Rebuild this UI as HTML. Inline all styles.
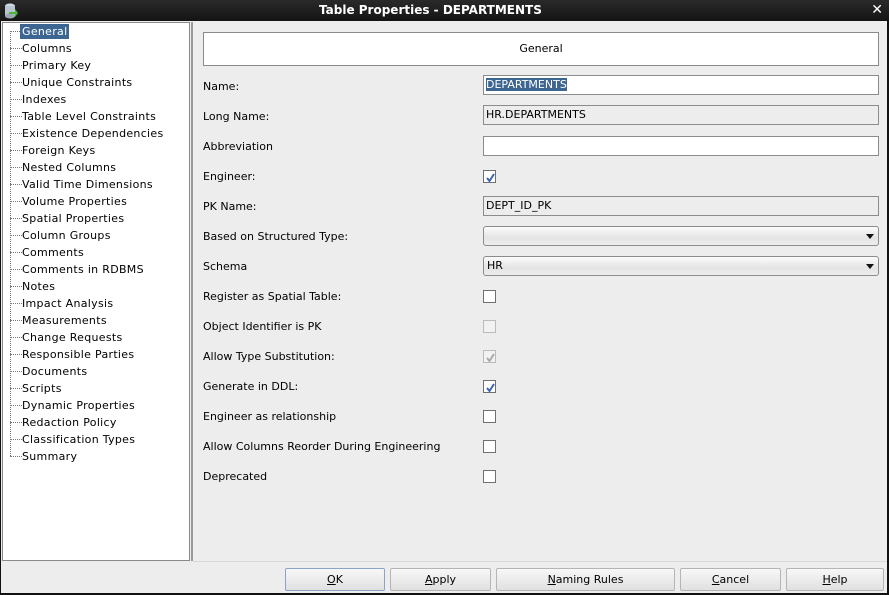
<!DOCTYPE html>
<html><head><style>
*{margin:0;padding:0;box-sizing:border-box}
body{width:889px;height:595px;background:#ededed;font-family:"DejaVu Sans","Liberation Sans",sans-serif;font-size:11px;color:#000;position:relative;overflow:hidden}
.abs{position:absolute}
#title{left:0;top:0;width:889px;height:21px;background:linear-gradient(#2a2a2a,#141414);color:#fff;font-weight:bold;font-size:12px;line-height:21px}
#frameL{left:0;top:21px;width:1px;height:574px;background:#111}
#frameR{left:887px;top:21px;width:2px;height:574px;background:#111}
#frameB{left:0;top:593px;width:889px;height:2px;background:#111}
#tree{left:2px;top:22px;width:188px;height:539px;background:#fff;border:1px solid #8a8a8a}
#split{left:191px;top:22px;width:2px;height:539px;background:#9a9a9a}
.ti{position:absolute;left:17px;height:15px;line-height:15px;padding:0 2px;letter-spacing:0.3px}
.dash{position:absolute;left:7px;width:12px;border-top:1px dotted #777}
#vline{left:7px;top:8px;height:425px;border-left:1px dotted #777}
#hdr{left:203px;top:32px;width:676px;height:34px;background:#fff;border:1px solid #8a8a8a;text-align:center;line-height:32px}
.lab{position:absolute;left:203px;height:14px;line-height:14px;margin-top:1px}
.tf{position:absolute;left:483px;width:396px;height:20px;border:1px solid #8c8c8c;line-height:18px;padding-left:2px}
.cb{position:absolute;left:483px;width:13px;height:13px;border:1px solid #707070;background:#fff}
.cb.dis{border-color:#bbb;background:#f2f2f2}
.cb svg{position:absolute;left:1px;top:1px}
.dd{position:absolute;left:483px;width:396px;height:20px;border:1px solid #8c8c8c;border-radius:3px;background:linear-gradient(#fbfbfb,#e4e4e4 60%,#ededed);line-height:18px;padding-left:3px}
.dd:after{content:"";position:absolute;right:4px;top:7px;border-left:4px solid transparent;border-right:4px solid transparent;border-top:5px solid #111}
.btn{position:absolute;top:568px;height:23px;border:1px solid #b5b5b5;border-radius:2px;background:linear-gradient(#f8f8f8,#e0e0e0);text-align:center;line-height:21px}
u{text-decoration:underline}
</style></head><body>
<div id="title" class="abs"><span style="position:absolute;left:319px;top:0">Table Properties - DEPARTMENTS</span><span style="position:absolute;right:6px;top:0;font-size:14px">✕</span></div>
<svg class="abs" style="left:4px;top:3px" width="14" height="16"><ellipse cx="6" cy="3" rx="5" ry="2.5" fill="#cfd8e0"/><rect x="1" y="3" width="10" height="10" fill="#b8c4cf"/><ellipse cx="6" cy="13" rx="5" ry="2.5" fill="#9aa8b4"/><path d="M5 9h6v-3l3 4-3 4v-3h-6z" fill="#49b53a"/></svg>
<div id="frameL" class="abs"></div><div id="frameR" class="abs"></div><div id="frameB" class="abs"></div>
<div id="tree" class="abs">
<div id="vline" class="abs"></div>
<div class="dash" style="top:8px"></div><div class="ti" style="top:1px;background:#3d6591;color:#fff">General</div>
<div class="dash" style="top:25px"></div><div class="ti" style="top:18px">Columns</div>
<div class="dash" style="top:42px"></div><div class="ti" style="top:35px">Primary Key</div>
<div class="dash" style="top:59px"></div><div class="ti" style="top:52px">Unique Constraints</div>
<div class="dash" style="top:76px"></div><div class="ti" style="top:69px">Indexes</div>
<div class="dash" style="top:93px"></div><div class="ti" style="top:86px">Table Level Constraints</div>
<div class="dash" style="top:110px"></div><div class="ti" style="top:103px">Existence Dependencies</div>
<div class="dash" style="top:127px"></div><div class="ti" style="top:120px">Foreign Keys</div>
<div class="dash" style="top:144px"></div><div class="ti" style="top:137px">Nested Columns</div>
<div class="dash" style="top:161px"></div><div class="ti" style="top:154px">Valid Time Dimensions</div>
<div class="dash" style="top:178px"></div><div class="ti" style="top:171px">Volume Properties</div>
<div class="dash" style="top:195px"></div><div class="ti" style="top:188px">Spatial Properties</div>
<div class="dash" style="top:212px"></div><div class="ti" style="top:205px">Column Groups</div>
<div class="dash" style="top:229px"></div><div class="ti" style="top:222px">Comments</div>
<div class="dash" style="top:246px"></div><div class="ti" style="top:239px">Comments in RDBMS</div>
<div class="dash" style="top:263px"></div><div class="ti" style="top:256px">Notes</div>
<div class="dash" style="top:280px"></div><div class="ti" style="top:273px">Impact Analysis</div>
<div class="dash" style="top:297px"></div><div class="ti" style="top:290px">Measurements</div>
<div class="dash" style="top:314px"></div><div class="ti" style="top:307px">Change Requests</div>
<div class="dash" style="top:331px"></div><div class="ti" style="top:324px">Responsible Parties</div>
<div class="dash" style="top:348px"></div><div class="ti" style="top:341px">Documents</div>
<div class="dash" style="top:365px"></div><div class="ti" style="top:358px">Scripts</div>
<div class="dash" style="top:382px"></div><div class="ti" style="top:375px">Dynamic Properties</div>
<div class="dash" style="top:399px"></div><div class="ti" style="top:392px">Redaction Policy</div>
<div class="dash" style="top:416px"></div><div class="ti" style="top:409px">Classification Types</div>
<div class="dash" style="top:433px"></div><div class="ti" style="top:426px">Summary</div>
</div>
<div id="split" class="abs"></div>
<div class="abs" style="left:193px;top:561px;width:694px;height:1px;background:#d8d8d8"></div>
<div id="hdr" class="abs">General</div>

<div class="lab" style="top:79px">Name:</div>
<div class="tf" style="top:75px;background:#fff"><span style="background:#3d6591;color:#fff">DEPARTMENTS</span></div>
<div class="lab" style="top:109px">Long Name:</div>
<div class="tf" style="top:105px;background:#ededed">HR.DEPARTMENTS</div>
<div class="lab" style="top:139px">Abbreviation</div>
<div class="tf" style="top:136px;background:#fff"></div>
<div class="lab" style="top:169px">Engineer:</div>
<div class="cb" style="top:170px"><svg width="11" height="11"><path d="M2 6l2.5 3L9 2" stroke="#3a64b0" stroke-width="2" fill="none"/></svg></div>
<div class="lab" style="top:199px">PK Name:</div>
<div class="tf" style="top:196px;background:#ededed">DEPT_ID_PK</div>
<div class="lab" style="top:229px">Based on Structured Type:</div>
<div class="dd" style="top:226px"></div>
<div class="lab" style="top:259px">Schema</div>
<div class="dd" style="top:256px">HR</div>
<div class="lab" style="top:289px">Register as Spatial Table:</div>
<div class="cb" style="top:290px"></div>
<div class="lab" style="top:319px">Object Identifier is PK</div>
<div class="cb dis" style="top:320px"></div>
<div class="lab" style="top:349px">Allow Type Substitution:</div>
<div class="cb dis" style="top:350px"><svg width="11" height="11"><path d="M2 6l2.5 3L9 2" stroke="#aaa" stroke-width="2" fill="none"/></svg></div>
<div class="lab" style="top:379px">Generate in DDL:</div>
<div class="cb" style="top:380px"><svg width="11" height="11"><path d="M2 6l2.5 3L9 2" stroke="#3a64b0" stroke-width="2" fill="none"/></svg></div>
<div class="lab" style="top:409px">Engineer as relationship</div>
<div class="cb" style="top:410px"></div>
<div class="lab" style="top:439px">Allow Columns Reorder During Engineering</div>
<div class="cb" style="top:440px"></div>
<div class="lab" style="top:469px">Deprecated</div>
<div class="cb" style="top:470px"></div>

<div class="btn" style="left:285px;width:100px;border-color:#8aa4c8"><u>O</u>K</div>
<div class="btn" style="left:390px;width:101px"><u>A</u>pply</div>
<div class="btn" style="left:496px;width:179px"><u>N</u>aming Rules</div>
<div class="btn" style="left:680px;width:101px"><u>C</u>ancel</div>
<div class="btn" style="left:786px;width:98px"><u>H</u>elp</div>
</body></html>
